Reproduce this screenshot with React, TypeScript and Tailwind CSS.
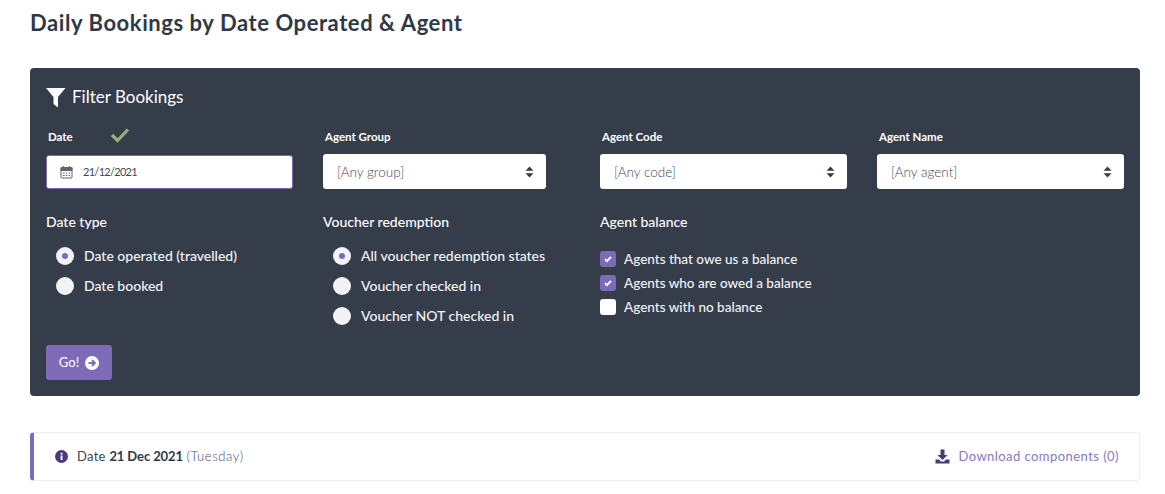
import React from "react";

const font = { fontFamily: 'Lato, "Open Sans", sans-serif' };

function Radio({ label, on = false }: { label: string; on?: boolean }) {
  return (
    <div className="flex items-center h-[30px]">
      <span className="w-[18px] h-[18px] rounded-full bg-[#f1f3f6] flex items-center justify-center shrink-0">
        {on && <span className="w-[6px] h-[6px] rounded-full bg-[#7e6bb8]" />}
      </span>
      <span className="ml-[10px] mb-[2px] text-[14px] font-medium text-[#f3f4f6]">{label}</span>
    </div>
  );
}

function Check({ label, on = false }: { label: string; on?: boolean }) {
  return (
    <div className="flex items-center h-[24px]">
      <span
        className={`w-4 h-4 rounded-[3px] flex items-center justify-center shrink-0 ${on ? "bg-[#7e6bb8]" : "bg-white"}`}
      >
        {on && (
          <svg width="10" height="10" viewBox="0 0 10 10" fill="none" stroke="#fff" strokeWidth="1.8">
            <path d="M2 5.2l2 2 4-4.4" />
          </svg>
        )}
      </span>
      <span className="ml-2 text-[13.5px] font-medium text-[#f3f4f6]">{label}</span>
    </div>
  );
}

function FakeSelect({ text, width }: { text: string; width: string }) {
  return (
    <div className={`${width} h-[35px] bg-white rounded-[3px] flex items-center justify-between pl-[14px] pr-[12px]`}>
      <span className="pt-[1px] text-[13.5px] font-light text-[#3f4a58]">{text}</span>
      <svg width="9" height="12" viewBox="0 0 9 12" fill="#333b48">
        <path d="M4.5 0.5L8.5 4.8H0.5zM4.5 11.5L0.5 7.2H8.5z" />
      </svg>
    </div>
  );
}

export default function App() {
  return (
    <div className="w-[1165px] h-[494px] bg-white overflow-hidden px-[30px]" style={font}>
      <h1 className="pt-[6px] h-[68px] text-[22px] font-bold text-[#2f3845] tracking-[0.57px]">
        Daily Bookings by Date Operated &amp; Agent
      </h1>

      <div className="w-[1110px] h-[328px] bg-[#363d4a] rounded-[4px] pl-4 pr-4 pt-[16px]">
        <div className="flex items-center h-[26px]">
          <svg width="20" height="21" viewBox="0 0 20 21" fill="#fff">
            <path d="M0 1h19.5L12 10v10.5l-4.5-3.5V10z" />
          </svg>
          <span className="ml-[6px] text-[17px] font-normal text-white">Filter Bookings</span>
        </div>

        <div className="flex mt-[15px]">
          <div className="w-[277px]">
            <div className="flex items-center h-[24px] pl-[2px]">
              <span className="text-[11.5px] font-bold text-white">Date</span>
              <svg className="ml-[37px] mb-[4px]" width="20" height="16" viewBox="0 0 20 16" fill="none" stroke="#8fb27f" strokeWidth="3.2">
                <path d="M2 8l5.5 5.5L18 2.5" />
              </svg>
            </div>
            <div className="w-[247px] h-[34px] mt-[6px] bg-white rounded-[3px] border border-[#7e6bb8] flex items-center pl-[13px]">
              <svg width="13" height="14" viewBox="0 0 13 14" fill="#5f6670" stroke="#5f6670" strokeWidth="1">
                <rect x="1" y="2.5" width="11" height="10.5" rx="1" fill="none" />
                <path d="M1 2.5h11v3H1zM3.5 1v2M9.5 1v2" />
                <path d="M3 8h1.5M5.8 8h1.5M8.6 8h1.5M3 10.5h1.5M5.8 10.5h1.5M8.6 10.5h1.5" />
              </svg>
              <span className="ml-[10px] text-[11px] tracking-[-0.7px] text-[#3f4855]">21/12/2021</span>
            </div>
          </div>
          <div className="w-[277px]">
            <div className="h-[24px] pl-[2px] flex items-center text-[11.5px] font-bold text-white">Agent Group</div>
            <div className="mt-[5px]"><FakeSelect text="[Any group]" width="w-[223px]" /></div>
          </div>
          <div className="w-[277px]">
            <div className="h-[24px] pl-[2px] flex items-center text-[11.5px] font-bold text-white">Agent Code</div>
            <div className="mt-[5px]"><FakeSelect text="[Any code]" width="w-[247px]" /></div>
          </div>
          <div className="w-[247px]">
            <div className="h-[24px] pl-[2px] flex items-center text-[11.5px] font-bold text-white">Agent Name</div>
            <div className="mt-[5px]"><FakeSelect text="[Any agent]" width="w-[247px]" /></div>
          </div>
        </div>

        <div className="flex mt-[22px]">
          <div className="w-[277px]">
            <div className="text-[14px] font-medium text-white h-[20px]">Date type</div>
            <div className="mt-[10px] pl-[10px]">
              <Radio label="Date operated (travelled)" on />
              <Radio label="Date booked" />
            </div>
          </div>
          <div className="w-[277px]">
            <div className="text-[14px] font-medium text-white h-[20px]">Voucher redemption</div>
            <div className="mt-[10px] pl-[10px]">
              <Radio label="All voucher redemption states" on />
              <Radio label="Voucher checked in" />
              <Radio label="Voucher NOT checked in" />
            </div>
          </div>
          <div className="w-[277px]">
            <div className="text-[14px] font-medium text-white h-[20px]">Agent balance</div>
            <div className="mt-[16px]">
              <Check label="Agents that owe us a balance" on />
              <Check label="Agents who are owed a balance" on />
              <Check label="Agents with no balance" />
            </div>
          </div>
        </div>

        <button className="mt-[14px] w-[66px] h-[35px] bg-[#7e6bb8] rounded-[3px] flex items-center justify-center text-[13px] text-white">
          Go!
          <svg className="ml-[6px]" width="14" height="14" viewBox="0 0 14 14">
            <circle cx="7" cy="7" r="7" fill="#fff" />
            <path d="M3.5 7h6M7 4l3 3-3 3" fill="none" stroke="#7e6bb8" strokeWidth="1.8" />
          </svg>
        </button>
      </div>

      <div className="w-[1110px] h-[49px] mt-[36px] bg-white rounded-[4px] border border-[#eceef1] border-l-[4px] border-l-[#7e6bb8] flex items-center justify-between pl-[21px] pr-[20px]">
        <div className="flex items-center text-[13px] tracking-[0.3px] text-[#3b4452]">
          <svg width="13" height="13" viewBox="0 0 13 13">
            <circle cx="6.5" cy="6.5" r="6.5" fill="#4a3a78" />
            <rect x="5.6" y="5.5" width="1.9" height="4.5" fill="#fff" />
            <rect x="5.6" y="2.8" width="1.9" height="1.8" fill="#fff" />
          </svg>
          <span className="ml-[9px]">
            Date <b className="font-bold tracking-[-0.1px] text-[#2f3845]">21 Dec 2021</b>{" "}
            <span className="font-light text-[#3d4f78] tracking-[0.6px]">(Tuesday)</span>
          </span>
        </div>
        <div className="flex items-center text-[13px] font-normal tracking-[0.45px] text-[#8a79c0]">
          <svg width="15" height="15" viewBox="0 0 15 15" fill="#4a3a78">
            <path d="M5.5 0.5h4V6h3L7.5 11 2.5 6h3zM0.5 10.5H4l2 2h3l2-2h3.5v4H0.5z" />
          </svg>
          <span className="ml-2">Download components (0)</span>
        </div>
      </div>
    </div>
  );
}
